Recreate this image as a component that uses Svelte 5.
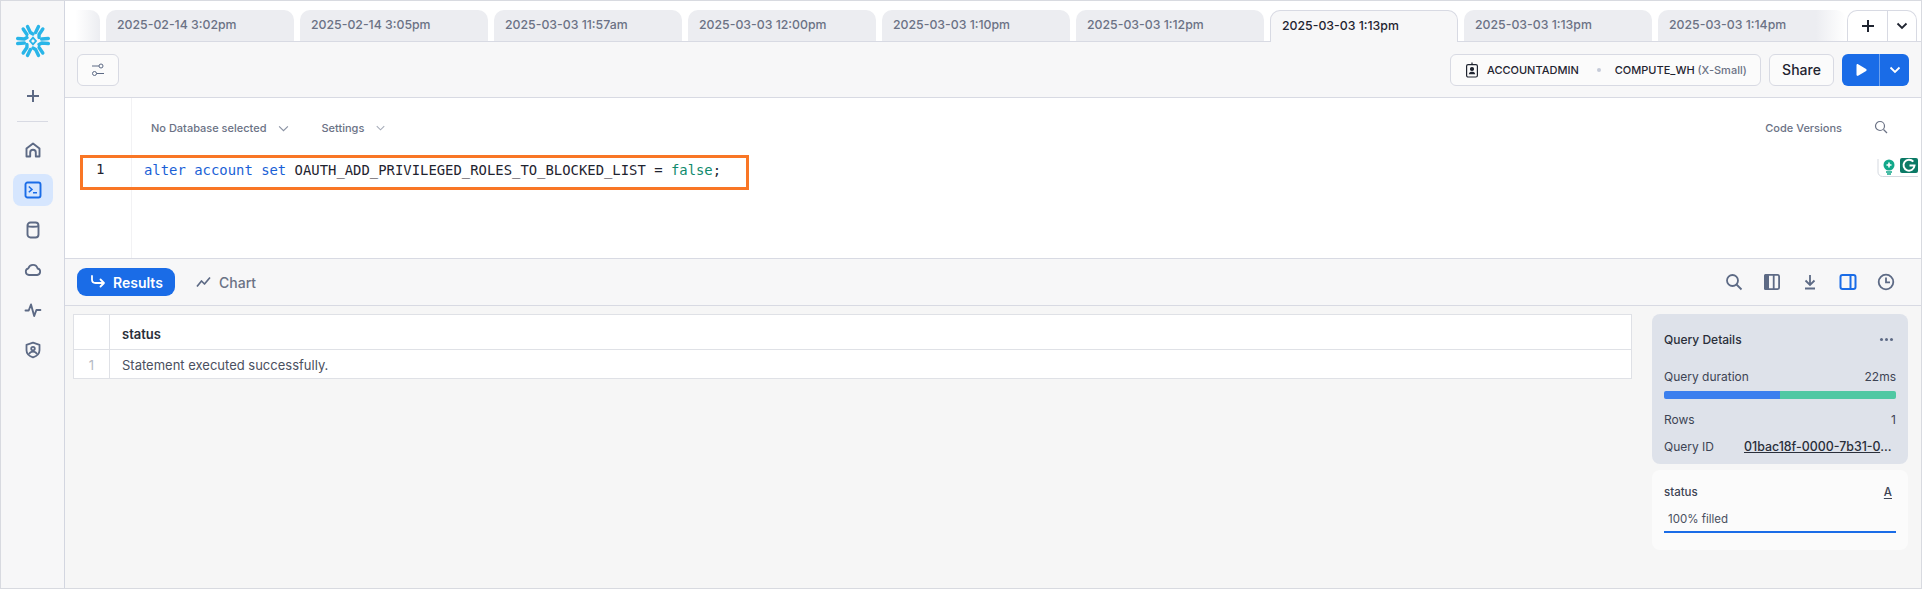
<script>
  const tabs = [
    { label: '2025-02-14 3:02pm' },
    { label: '2025-02-14 3:05pm' },
    { label: '2025-03-03 11:57am' },
    { label: '2025-03-03 12:00pm' },
    { label: '2025-03-03 1:10pm' },
    { label: '2025-03-03 1:12pm' },
    { label: '2025-03-03 1:13pm', active: true },
    { label: '2025-03-03 1:13pm' },
    { label: '2025-03-03 1:14pm', fade: true }
  ]
</script>

<div class="app">
  <nav class="sidebar">
    <svg class="logo" width="34" height="34" viewBox="-17 -17 34 34" fill="none" stroke="#29b5e8" stroke-width="3.4" stroke-linecap="round">
      {#each [0, 60, 120, 180, 240, 300] as angle}
        <g transform="rotate({angle})">
          <path d="M-5.5 -14.5 L-2.6 -8.5 L0 -7" stroke-linejoin="round" />
          <path d="M5.5 -14.5 L2.6 -8.5" />
        </g>
      {/each}
      <path d="M0 -3.4 L3 0 L0 3.4 L-3 0 Z" stroke-width="1.8" stroke-linecap="butt" />
    </svg>
    <svg class="plus" width="14" height="14" viewBox="0 0 14 14" fill="none" stroke="#5d6a85" stroke-width="2"><path d="M7 1v12M1 7h12" /></svg>
    <div class="side-rule"></div>
    <div class="nav-list">
      <div class="nav-item">
        <svg width="18" height="18" viewBox="0 0 18 18" fill="none" stroke="#5d6a85" stroke-width="1.9" stroke-linejoin="round"><path d="M2.5 15.5V7.6L9 2.4l6.5 5.2v7.900h-3.700v-4a2.800 2.800 0 0 0-5.600 0v4z" /></svg>
      </div>
      <div class="nav-item active">
        <svg width="18" height="18" viewBox="0 0 18 18" fill="none" stroke="#1a6ce7" stroke-width="1.9"><rect x="1.500" y="1.500" width="15" height="15" rx="2" /><path d="M4.800 5.500 8 8.400 4.800 11.200M9 11.800h4" stroke-width="1.500" /></svg>
      </div>
      <div class="nav-item">
        <svg width="18" height="18" viewBox="0 0 18 18" fill="none" stroke="#5d6a85" stroke-width="1.900"><rect x="3.500" y="1.500" width="11" height="15" rx="3" /><path d="M3.500 5c1.500 1 9.500 1 11 0" /></svg>
      </div>
      <div class="nav-item">
        <svg width="18" height="18" viewBox="0 0 18 18" fill="none" stroke="#5d6a85" stroke-width="1.800" stroke-linejoin="round"><path d="M5 14a3.400 3.400 0 0 1-.6-6.700 4.800 4.800 0 0 1 9.200.2 3.300 3.300 0 0 1-.4 6.500z" /></svg>
      </div>
      <div class="nav-item">
        <svg width="18" height="18" viewBox="0 0 18 18" fill="none" stroke="#5d6a85" stroke-width="1.900" stroke-linejoin="round" stroke-linecap="round"><path d="M1.500 9.500h3.200L7 3.500l3.200 11.500 2.200-6h4" /></svg>
      </div>
      <div class="nav-item">
        <svg width="18" height="18" viewBox="0 0 18 18" fill="none" stroke="#5d6a85" stroke-width="1.800" stroke-linejoin="round"><path d="M9 1.600l6.500 2.200v5.400c0 3.400-3 5.900-6.500 7.200-3.500-1.300-6.500-3.800-6.500-7.200V3.800z" /><circle cx="9" cy="7.600" r="1.800" /><path d="M5 13.200c.8-1.800 2.200-2.500 4-2.500s3.200.7 4 2.500" /></svg>
      </div>
    </div>
  </nav>

  <main class="main">
    <div class="tabs">
      <div class="tab-stub"></div>
      {#each tabs as tab}
        <div class="tab" class:active={tab.active} class:fade={tab.fade}>{tab.label}</div>
      {/each}
      <div class="add-group">
        <button class="add">
          <svg width="14" height="14" viewBox="0 0 14 14" fill="none" stroke="#1f2430" stroke-width="2"><path d="M7 1v12M1 7h12" /></svg>
        </button>
        <button class="add-more">
          <svg width="12" height="8" viewBox="0 0 12 8" fill="none" stroke="#1f2430" stroke-width="1.800"><path d="M1.500 1.500 6 6l4.500-4.500" /></svg>
        </button>
      </div>
    </div>

    <div class="toolbar">
      <button class="filter">
        <svg width="14" height="14" viewBox="0 0 14 14" fill="none" stroke="#5d6a85" stroke-width="1"><circle cx="10" cy="3" r="2" /><circle cx="3.500" cy="10.500" r="2" /><path d="M1 3h7M5.500 10.500H13" /></svg>
      </button>
      <div class="toolbar-right">
        <div class="context">
          <svg width="14" height="16" viewBox="0 0 14 16" fill="none" stroke="#1f2430" stroke-width="1.200"><rect x="1.600" y="2.600" width="10.800" height="12.400" rx="1.500" /><path d="M7 .5v2" /><circle cx="7" cy="7" r="1.500" fill="#1f2430" /><path d="M3.800 12.200c.3-1.900 1.500-2.500 3.200-2.500s2.900.6 3.200 2.500z" fill="#1f2430" stroke="none" /></svg>
          <span class="role">ACCOUNTADMIN</span>
          <span class="sep"></span>
          <span class="wh">COMPUTE_WH <span class="size">(X-Small)</span></span>
        </div>
        <button class="share">Share</button>
        <div class="run">
          <button class="run-main">
            <svg width="12" height="14" viewBox="0 0 12 14" fill="#fff"><path d="M1.500 2.200c0-.9.900-1.400 1.600-1l8 4.800c.7.400.7 1.500 0 2l-8 4.800c-.7.400-1.600-.1-1.600-1z" /></svg>
          </button>
          <button class="run-more">
            <svg width="12" height="8" viewBox="0 0 12 8" fill="none" stroke="#fff" stroke-width="1.800"><path d="M1.500 1.500 6 6l4.500-4.500" /></svg>
          </button>
        </div>
      </div>
    </div>

    <div class="editor">
      <div class="gutter">1</div>
      <div class="pane">
        <div class="pane-head">
          <span class="menu">No Database selected
            <svg width="11" height="7" viewBox="0 0 12 8" fill="none" stroke="#8a92a3" stroke-width="1.300"><path d="M1 1.500 6 6.500l5-5" /></svg>
          </span>
          <span class="menu second">Settings
            <svg width="9" height="6" viewBox="0 0 12 8" fill="none" stroke="#a5abb8" stroke-width="1.400"><path d="M1 1.500 6 6.500l5-5" /></svg>
          </span>
          <span class="versions">Code Versions</span>
          <svg width="14" height="14" viewBox="0 0 14 14" fill="none" stroke="#6b7285" stroke-width="1.200"><circle cx="6" cy="6" r="4.500" /><path d="m9.500 9.500 3.500 3.500" /></svg>
        </div>
        <div class="code"><span class="kw">alter</span> <span class="kw">account</span> <span class="kw">set</span> OAUTH_ADD_PRIVILEGED_ROLES_TO_BLOCKED_LIST = <span class="val">false</span>;</div>
      </div>
      <div class="callout"></div>
      <svg class="grammarly" width="43" height="20" viewBox="0 0 43 20" fill="none">
        <path d="M1 1v13a4.500 4.500 0 0 0 4.500 4.500H41" stroke="#d5d9e0" />
        <circle cx="12" cy="7" r="5.500" fill="#12a88a" />
        <path d="M12 4.500v5M9.500 7h5" stroke="#fff" stroke-width="1.600" />
        <path d="M9 14h6M10 16h4" stroke="#12a88a" stroke-width="1.500" />
        <rect x="23" y="0" width="18" height="15" rx="2" fill="#0b7a66" />
        <path d="M36.300 3.700a5.500 5.500 0 1 0 1.200 3.800h-5" stroke="#fff" stroke-width="2" />
      </svg>
    </div>

    <div class="results-bar">
      <button class="results-btn">
        <svg width="16" height="14" viewBox="0 0 16 14" fill="none" stroke="#fff" stroke-width="1.800" stroke-linejoin="round" stroke-linecap="round"><path d="M2 1v3.500C2 6.800 3.500 8 5.500 8H14M10.500 4.500 14 8l-3.500 3.500" /></svg>
        Results
      </button>
      <span class="chart">
        <svg width="15" height="12" viewBox="0 0 15 12" fill="none" stroke="#5d6a85" stroke-width="1.700" stroke-linejoin="round"><path d="M1 10.500 5.500 5l3 3L14 1.500" /></svg>
        Chart
      </span>
      <div class="bar-icons">
        <svg width="18" height="18" viewBox="0 0 18 18" fill="none" stroke="#5d6a85" stroke-width="1.800"><circle cx="7.500" cy="7.500" r="5.500" /><path d="m11.500 11.500 5 5" /></svg>
        <svg width="18" height="18" viewBox="0 0 18 18" fill="none" stroke="#5d6a85" stroke-width="1.800"><rect x="2" y="1.900" width="14.100" height="14.200" rx="1.500" /><path d="M10.700 2v14" /><rect x="1" y="1" width="5" height="16" rx="1.500" fill="#5d6a85" stroke="none" /></svg>
        <svg width="18" height="18" viewBox="0 0 18 18" fill="none" stroke="#5d6a85" stroke-width="1.800"><path d="M9 2v9.500M4.500 7.500 9 12l4.500-4.500M4 15.500h10" /></svg>
        <svg width="18" height="18" viewBox="0 0 18 18" fill="none" stroke="#1a6ce7" stroke-width="2"><rect x="1.500" y="2" width="15" height="14" rx="2" /><path d="M11.500 2v14" /></svg>
        <svg width="18" height="18" viewBox="0 0 18 18" fill="none" stroke="#5d6a85" stroke-width="1.800"><circle cx="9" cy="9" r="7.300" /><path d="M9 4.500V9.300h4" /></svg>
      </div>
    </div>

    <div class="content">
      <div class="grid">
        <div class="cell idx head-cell"></div>
        <div class="cell head-cell status-head">status</div>
        <div class="cell idx num">1</div>
        <div class="cell body-cell">Statement executed successfully.</div>
      </div>

      <aside class="side">
        <section class="card details">
          <div class="row title-row">
            <span class="title">Query Details</span>
            <span class="dots"></span>
          </div>
          <div class="row duration"><span>Query duration</span><span>22ms</span></div>
          <div class="meter"><span class="blue"></span><span class="green"></span></div>
          <div class="row rows"><span>Rows</span><span>1</span></div>
          <div class="row qid"><span>Query ID</span><span class="link"><u>01bac18f-0000-7b31-0</u>...</span></div>
        </section>
        <section class="card stat">
          <div class="row"><span>status</span><span class="letter">A</span></div>
          <div class="filled">100% filled</div>
          <div class="fill-line"></div>
        </section>
      </aside>
    </div>
  </main>
</div>

<style>
  :global(body) {
    margin: 0;
    font-family: Inter, "Liberation Sans", sans-serif;
  }

  button {
    font-family: inherit;
    padding: 0;
    cursor: pointer;
  }

  .app {
    box-sizing: border-box;
    width: 1922px;
    height: 589px;
    display: flex;
    border: 1px solid #d8dae0;
    background: #f6f6f6;
    overflow: hidden;
  }

  .sidebar {
    box-sizing: border-box;
    width: 64px;
    flex-shrink: 0;
    display: flex;
    flex-direction: column;
    align-items: center;
    border-right: 1px solid #d3d6e0;
    background: #f7f7f8;
    padding-top: 23px;
  }

  .logo {
    margin-bottom: 31px;
  }

  .plus {
    display: block;
  }

  .side-rule {
    width: 31px;
    height: 1px;
    background: #d8dae3;
    margin-top: 18px;
    margin-bottom: 12px;
  }

  .nav-list {
    display: flex;
    flex-direction: column;
    gap: 8px;
  }

  .nav-item {
    width: 40px;
    height: 32px;
    display: flex;
    align-items: center;
    justify-content: center;
    border-radius: 8px;
  }

  .nav-item.active {
    background: #d6e6fe;
  }

  .main {
    flex: 1;
    min-width: 0;
    display: flex;
    flex-direction: column;
  }

  .tabs {
    box-sizing: border-box;
    height: 41px;
    display: flex;
    align-items: flex-end;
    gap: 6px;
    border-bottom: 1px solid #d8dae3;
    background: #fff;
  }

  .tab-stub {
    width: 35px;
    height: 31px;
    flex-shrink: 0;
    border-top-right-radius: 10px;
    background: linear-gradient(to right, #fff 30%, #ecedf1);
  }

  .tab {
    box-sizing: border-box;
    width: 188px;
    height: 31px;
    flex-shrink: 0;
    display: flex;
    align-items: center;
    padding: 0 11px 2px;
    border-radius: 10px 10px 0 0;
    background: #ecedf1;
    color: #6b7285;
    font-size: 12.300px;
    font-weight: 500;
  }

  .tab.active {
    height: 32px;
    margin-bottom: -1px;
    padding-bottom: 3px;
    border: 1px solid #d8dae3;
    border-bottom: none;
    background: #f7f7f8;
    color: #1f2430;
  }

  .tab.fade {
    background: linear-gradient(to right, #ecedf1 84%, #fff);
  }

  .add-group {
    box-sizing: border-box;
    height: 31px;
    display: flex;
    margin-left: -5px;
    border: 1px solid #d8dae3;
    border-bottom: none;
    border-radius: 10px 10px 0 0;
    background: #fff;
  }

  .add,
  .add-more {
    border: none;
    background: none;
    display: flex;
    align-items: center;
    justify-content: center;
  }

  .add {
    width: 40px;
    border-right: 1px solid #d8dae3;
  }

  .add-more {
    width: 28px;
  }

  .toolbar {
    box-sizing: border-box;
    height: 56px;
    flex-shrink: 0;
    display: flex;
    align-items: center;
    justify-content: space-between;
    padding: 0 12px;
    border-bottom: 1px solid #d8dae3;
    background: #f7f7f8;
  }

  .filter {
    width: 42px;
    height: 32px;
    display: flex;
    align-items: center;
    justify-content: center;
    border: 1px solid #d8dae3;
    border-radius: 6px;
    background: #fbfbfb;
  }

  .toolbar-right {
    display: flex;
    align-items: center;
    gap: 8px;
  }

  .context {
    box-sizing: border-box;
    width: 311px;
    height: 32px;
    display: flex;
    align-items: center;
    padding-left: 14px;
    border: 1px solid #d8dae3;
    border-radius: 6px;
    background: #fbfbfb;
    color: #1f2430;
    font-size: 11px;
    font-weight: 500;
    white-space: nowrap;
  }

  .role {
    margin-left: 8px;
  }

  .sep {
    width: 4px;
    height: 4px;
    border-radius: 50%;
    background: #c6cbd8;
    margin: 0 14px 0 18px;
  }

  .size {
    color: #6b7285;
  }

  .share {
    width: 65px;
    height: 32px;
    border: 1px solid #d8dae3;
    border-radius: 6px;
    background: #fbfbfb;
    color: #1f2430;
    font-size: 14px;
    font-weight: 500;
  }

  .run {
    display: flex;
    height: 32px;
    border-radius: 6px;
    overflow: hidden;
    background: #1a6ce7;
  }

  .run-main,
  .run-more {
    border: none;
    background: none;
    display: flex;
    align-items: center;
    justify-content: center;
  }

  .run-main {
    width: 38px;
    border-right: 1px solid #6ea2ef;
  }

  .run-more {
    width: 29px;
  }

  .editor {
    box-sizing: border-box;
    position: relative;
    height: 161px;
    flex-shrink: 0;
    display: flex;
    border-bottom: 1px solid #d8dae3;
    background: #fff;
  }

  .gutter {
    box-sizing: border-box;
    width: 67px;
    flex-shrink: 0;
    padding: 63px 0 0 31px;
    border-right: 1px solid #f2f2f4;
    color: #1f2430;
    font-family: "DejaVu Sans Mono", monospace;
    font-size: 14px;
    line-height: 17px;
  }

  .pane {
    flex: 1;
    min-width: 0;
  }

  .pane-head {
    box-sizing: border-box;
    height: 62px;
    display: flex;
    align-items: flex-start;
    padding: 22px 33px 0 19px;
    color: #6b7285;
    font-size: 11px;
    font-weight: 500;
    line-height: 16px;
  }

  .menu {
    display: flex;
    align-items: center;
    gap: 12px;
  }

  .menu.second {
    margin-left: 32px;
  }

  .versions {
    margin-left: auto;
    margin-right: 32px;
  }

  .code {
    padding-left: 12px;
    color: #1f2430;
    font-family: "DejaVu Sans Mono", monospace;
    font-size: 13.900px;
    line-height: 20px;
    white-space: pre;
  }

  .kw {
    color: #1a5fd6;
  }

  .val {
    color: #0f8a6d;
  }

  .callout {
    position: absolute;
    left: 15px;
    top: 57px;
    box-sizing: border-box;
    width: 669px;
    height: 35px;
    border: 3px solid #f97625;
  }

  .grammarly {
    position: absolute;
    right: 1px;
    top: 60px;
  }

  .results-bar {
    box-sizing: border-box;
    height: 47px;
    flex-shrink: 0;
    display: flex;
    align-items: center;
    padding: 0 12px;
    border-bottom: 1px solid #d8dae3;
    background: #f7f7f8;
  }

  .results-btn {
    width: 98px;
    height: 28px;
    display: flex;
    align-items: center;
    gap: 7px;
    padding-left: 13px;
    box-sizing: border-box;
    border: none;
    border-radius: 9px;
    background: #1a6ce7;
    color: #fff;
    font-size: 14px;
    font-weight: 600;
  }

  .chart {
    display: flex;
    align-items: center;
    gap: 8px;
    margin-left: 21px;
    color: #6b7285;
    font-size: 14px;
    font-weight: 500;
  }

  .bar-icons {
    display: flex;
    gap: 20px;
    margin-left: auto;
    margin-right: 14px;
  }

  .content {
    flex: 1;
    min-height: 0;
    display: flex;
    align-items: flex-start;
    padding: 8px 13px 0 8px;
  }

  .grid {
    flex: 1;
    display: grid;
    grid-template-columns: 36px 1fr;
    grid-template-rows: 35px 28px;
    border: 1px solid #dfe1e6;
    background: #fff;
    color: #4a5060;
    font-size: 13px;
  }

  .cell {
    box-sizing: border-box;
    display: flex;
    align-items: center;
    padding-left: 12px;
  }

  .head-cell {
    border-bottom: 1px solid #dfe1e6;
  }

  .idx {
    border-right: 1px solid #dfe1e6;
  }

  .num {
    justify-content: center;
    padding-left: 0;
    padding-top: 2px;
    color: #b5b9c3;
  }

  .status-head {
    padding-top: 4px;
    color: #2a2f3a;
    font-weight: 600;
  }

  .body-cell {
    padding-top: 2px;
  }

  .side {
    width: 256px;
    flex-shrink: 0;
    margin-left: 20px;
    display: flex;
    flex-direction: column;
    gap: 6px;
    color: #3d4454;
    font-size: 12px;
  }

  .card {
    box-sizing: border-box;
    padding: 0 12px;
    border-radius: 8px;
  }

  .row {
    display: flex;
    justify-content: space-between;
    align-items: center;
  }

  .details {
    height: 150px;
    padding-top: 17px;
    background: #dee2ea;
  }

  .title {
    font-weight: 500;
    color: #2a2f3a;
  }

  .title-row {
    height: 16px;
  }

  .dots {
    width: 3px;
    height: 3px;
    margin-right: 8px;
    border-radius: 50%;
    background: #5d6a85;
    box-shadow: -5px 0 #5d6a85, 5px 0 #5d6a85;
  }

  .duration {
    margin-top: 21px;
    height: 16px;
  }

  .meter {
    display: flex;
    height: 8px;
    margin-top: 7px;
    border-radius: 2px;
    overflow: hidden;
  }

  .blue {
    width: 50%;
    background: #3b7fee;
  }

  .green {
    flex: 1;
    background: #50c8a3;
  }

  .rows {
    margin-top: 12px;
    height: 16px;
  }

  .qid {
    margin-top: 11px;
    height: 16px;
    gap: 30px;
  }

  .qid span:first-child {
    flex-shrink: 0;
  }

  .link {
    flex: 1;
    white-space: nowrap;
    font-size: 12.400px;
    font-weight: 500;
    color: #2a2f3a;
  }

  .stat {
    height: 80px;
    padding-top: 14px;
    background: #fbfbfb;
  }

  .stat .row {
    height: 16px;
    font-size: 11.500px;
    font-weight: 500;
  }

  .letter {
    margin-right: 4px;
    text-decoration: underline;
    text-underline-offset: 2px;
  }

  .filled {
    margin-top: 11px;
    padding-left: 4px;
    font-size: 11.500px;
    line-height: 16px;
    color: #4a5060;
  }

  .fill-line {
    height: 2px;
    margin-top: 4px;
    background: #1a6ce7;
  }
</style>
